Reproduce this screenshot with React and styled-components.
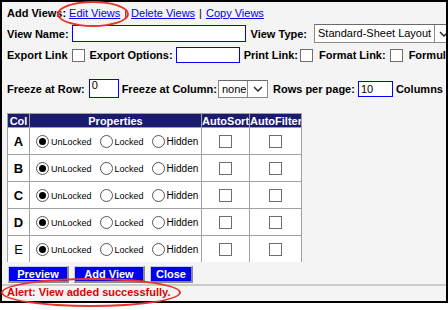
import styled, { createGlobalStyle } from "styled-components";

const GlobalStyle = createGlobalStyle`
  body {
    margin: 0;
    background: #fff;
    font-family: "Liberation Sans", Arial, sans-serif;
  }
`;

const Page = styled.div`
  position: relative;
  width: 448px;
  height: 310px;
  overflow: hidden;
`;

const Frame = styled.div`
  box-sizing: border-box;
  width: 448px;
  height: 303px;
  border: 2px solid #000;
  background: #f4f4f4;
  padding: 3px 0 0 5px;
  overflow: hidden;
  font-size: 11px;
  color: #000;
`;

const Row = styled.div`
  display: flex;
  align-items: center;
  white-space: nowrap;
  height: ${p => p.h || 16}px;
  margin-top: ${p => p.mt || 0}px;
  & > * {
    flex-shrink: 0;
  }
`;

const Label = styled.b`
  font-weight: bold;
  margin-left: ${p => p.ml || 0}px;
  margin-right: ${p => p.mr ?? 3}px;
`;

const Link = styled.a`
  color: #0000ee;
  text-decoration: underline;
  cursor: pointer;
`;

const Sep = styled.span`
  margin: 0 4px;
`;

const TextInput = styled.div`
  box-sizing: border-box;
  width: ${p => p.w}px;
  height: ${p => p.h || 16}px;
  border: 1px solid #0000ff;
  background: #fff;
  padding: 0 2px;
  line-height: ${p => (p.top ? 11 : (p.h || 16) - 2)}px;
  font-size: 11px;
`;

const SelectBox = styled.div`
  box-sizing: border-box;
  display: flex;
  align-items: stretch;
  width: ${p => p.w}px;
  height: ${p => p.h || 18}px;
  border: 1px solid #8a8a8a;
  border-top-color: #6a6a6a;
  background: #fff;
  margin-left: ${p => p.ml ?? 4}px;
`;

const SelectText = styled.span`
  flex: 1;
  padding-left: 3px;
  line-height: ${p => (p.h || 18) - 2}px;
  font-size: 11px;
`;

const Chevron = styled.span`
  display: flex;
  align-items: center;
  justify-content: center;
  width: ${p => p.w || 17}px;
  border-left: 1px solid #8a8a8a;
  background: #fff;
`;

const Check = styled.span`
  box-sizing: border-box;
  display: inline-block;
  width: 13px;
  height: 13px;
  border: 1px solid #6e6e6e;
  background: #fff;
  margin: 0 ${p => p.mr ?? 6}px 0 ${p => p.ml ?? 4}px;
  vertical-align: middle;
`;

const TableWrap = styled.div`
  height: 149px;
  overflow: hidden;
  margin-top: 15px;
`;

const Table = styled.table`
  border-collapse: collapse;
  table-layout: fixed;
  width: 294px;
  background: #fff;
`;

const Th = styled.th`
  height: 13px;
  padding: 0;
  background: #1a1a6e;
  color: #fff;
  font-size: 11px;
  font-weight: bold;
  text-align: center;
  border: 1px solid #a0a0a0;
  line-height: 12px;
  white-space: nowrap;
  overflow: hidden;
`;

const Td = styled.td`
  height: 26px;
  padding: 0;
  border: 1px solid #a0a0a0;
  text-align: center;
  vertical-align: middle;
`;

const ColLetter = styled(Td)`
  font-size: 13px;
  font-weight: ${p => (p.light ? "normal" : "bold")};
`;

const Radios = styled.div`
  display: flex;
  align-items: center;
  padding-left: 6px;
  white-space: nowrap;
`;

const RadioItem = styled.label`
  display: inline-flex;
  align-items: center;
  gap: 2px;
  margin-right: ${p => p.mr ?? 8}px;
  font-size: ${p => p.fs || 9}px;
  padding-top: 1px;
`;

const Radio = styled.span`
  box-sizing: border-box;
  display: inline-flex;
  align-items: center;
  justify-content: center;
  width: 13px;
  height: 13px;
  border-radius: 50%;
  border: 1px solid #555;
  background: #fff;
  margin-top: -1px;
  &::after {
    content: "";
    display: ${p => (p.on ? "block" : "none")};
    width: 7px;
    height: 7px;
    border-radius: 50%;
    background: #000;
  }
`;

const ButtonBar = styled.div`
  display: flex;
  gap: 5px;
  margin-top: 4px;
  margin-left: 1px;
`;

const Button = styled.button`
  box-sizing: border-box;
  width: ${p => p.w}px;
  height: 17px;
  padding: 0;
  background: #0000f5;
  color: #fff;
  font-family: "Liberation Sans", Arial, sans-serif;
  font-size: 11px;
  font-weight: bold;
  border: 1px solid #c8c8f8;
  border-right: 2px solid #8a8a8a;
  border-bottom: 2px solid #8a8a8a;
  text-decoration: ${p => (p.u ? "underline" : "none")};
  cursor: pointer;
`;

const Rule = styled.div`
  height: 2px;
  background: #cbcbcb;
  margin: 1px 0 0 -5px;
`;

const Alert = styled.div`
  color: #e00000;
  font-weight: bold;
  font-size: 11px;
  line-height: 13px;
`;

const Ring = styled.div`
  position: absolute;
  box-sizing: border-box;
  left: ${p => p.x}px;
  top: ${p => p.y}px;
  width: ${p => p.w}px;
  height: ${p => p.h}px;
  border: 2px solid #e8322b;
  border-radius: 50%;
  pointer-events: none;
`;

const Down = () => (
  <svg width="10" height="6" viewBox="0 0 10 6">
    <polyline points="1,1 5,5 9,1" fill="none" stroke="#222" strokeWidth="1.4" />
  </svg>
);

const rows = ["A", "B", "C", "D", "E"];

const App = () => {
  return (
    <Page>
      <GlobalStyle />
      <Frame>
        <Row h={15}>
          <Label>Add Views:</Label>
          <Link>Edit Views</Link>
          <Sep>|</Sep>
          <Link>Delete Views</Link>
          <Sep>|</Sep>
          <Link>Copy Views</Link>
        </Row>
        <Row h={19} mt={4}>
          <Label>View Name:</Label>
          <TextInput w={174} h={17} />
          <Label ml={5}>View Type:</Label>
          <SelectBox w={140} h={19}>
            <SelectText h={19}>Standard-Sheet Layout</SelectText>
            <Chevron w={18}>
              <Down />
            </Chevron>
          </SelectBox>
        </Row>
        <Row h={16} mt={4}>
          <Label mr={0}>Export Link</Label>
          <Check ml={4} mr={5} />
          <Label>Export Options:</Label>
          <TextInput w={64} h={16} />
          <Label ml={4} mr={0}>Print Link:</Label>
          <Check ml={2} mr={6} />
          <Label mr={0}>Format Link:</Label>
          <Check ml={4} mr={6} />
          <Label>Formula Link:</Label>
        </Row>
        <Row h={19} mt={16}>
          <Label mr={4}>Freeze at Row:</Label>
          <TextInput w={30} h={19} top>
            0
          </TextInput>
          <Label ml={3} mr={0}>Freeze at Column:</Label>
          <SelectBox w={50} h={18} ml={1}>
            <SelectText h={18}>none</SelectText>
            <Chevron w={19}>
              <Down />
            </Chevron>
          </SelectBox>
          <Label ml={5} mr={3}>Rows per page:</Label>
          <TextInput w={35} h={16}>
            10
          </TextInput>
          <Label ml={3}>Columns per page:</Label>
        </Row>
        <TableWrap>
          <Table>
            <colgroup>
              <col style={{ width: 22 }} />
              <col style={{ width: 172 }} />
              <col style={{ width: 48 }} />
              <col style={{ width: 52 }} />
            </colgroup>
            <thead>
              <tr>
                <Th>Col</Th>
                <Th>Properties</Th>
                <Th>AutoSort</Th>
                <Th>AutoFilter</Th>
              </tr>
            </thead>
            <tbody>
              {rows.map(letter => (
                <tr key={letter}>
                  <ColLetter light={letter === "E"}>{letter}</ColLetter>
                  <Td>
                    <Radios>
                      <RadioItem>
                        <Radio on />
                        UnLocked
                      </RadioItem>
                      <RadioItem>
                        <Radio />
                        Locked
                      </RadioItem>
                      <RadioItem fs={10} mr={0}>
                        <Radio />
                        Hidden
                      </RadioItem>
                    </Radios>
                  </Td>
                  <Td>
                    <Check ml={0} mr={0} />
                  </Td>
                  <Td>
                    <Check ml={0} mr={0} />
                  </Td>
                </tr>
              ))}
            </tbody>
          </Table>
        </TableWrap>
        <ButtonBar>
          <Button w={61} u>
            Preview
          </Button>
          <Button w={71}>Add View</Button>
          <Button w={43}>Close</Button>
        </ButtonBar>
        <Rule />
        <Alert>Alert: View added successfully.</Alert>
      </Frame>
      <Ring x={57} y={1} w={72} h={26} />
      <Ring x={1} y={278} w={180} h={29} />
    </Page>
  );
};

export default App;
